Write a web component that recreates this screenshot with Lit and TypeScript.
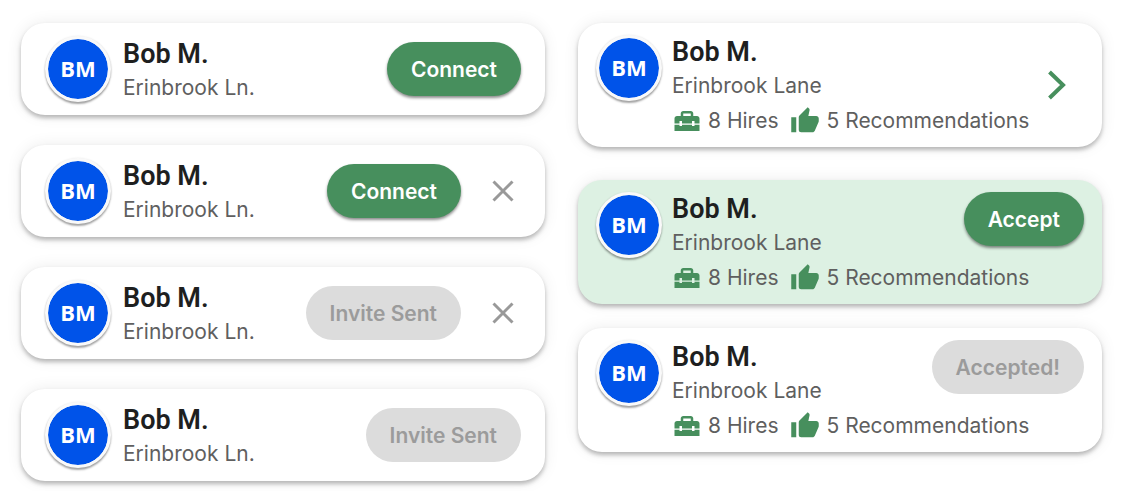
import { LitElement, html, css, nothing, svg } from "lit";
import { customElement, property } from "lit/decorators.js";
import { classMap } from "lit/directives/class-map.js";

const toolboxIcon = svg`<path d="M18 16H16V15H8V16H6V15H2V20H22V15H18V16M20 8H17V6C17 4.9 16.1 4 15 4H9C7.9 4 7 4.9 7 6V8H4C2.9 8 2 8.9 2 10V14H6V12H8V14H16V12H18V14H22V10C22 8.9 21.1 8 20 8M15 8H9V6H15V8Z"/>`;
const thumbIcon = svg`<path d="M23,10C23,8.89 22.1,8 21,8H14.68L15.64,3.43C15.66,3.33 15.67,3.22 15.67,3.11C15.67,2.7 15.5,2.32 15.23,2.05L14.17,1L7.59,7.58C7.22,7.95 7,8.45 7,9V19A2,2 0 0,0 9,21H18C18.83,21 19.54,20.5 19.84,19.78L22.86,12.73C22.95,12.5 23,12.26 23,12V10M1,21H5V9H1V21Z"/>`;

@customElement("person-card")
export class PersonCard extends LitElement {
  @property() name = "";
  @property() initials = "";
  @property() address = "";
  @property() action = "";
  @property({ type: Boolean }) done = false;
  @property({ type: Boolean }) dismissible = false;
  @property({ type: Boolean }) highlighted = false;
  @property({ type: Boolean }) detailed = false;
  @property({ type: Number }) hires = 0;
  @property({ type: Number }) recommendations = 0;

  static styles = css`
    :host {
      display: block;
      font-family: Inter, "Liberation Sans", sans-serif;
    }
    .card {
      display: grid;
      grid-template-columns: auto minmax(0, 1fr) auto;
      align-items: center;
      column-gap: 12px;
      padding: 10px 24px;
      border-radius: 24px;
      background: #fff;
      box-shadow: 0 3px 4px rgba(0, 0, 0, 0.26), 0 0 16px rgba(0, 0, 0, 0.08);
    }
    .detailed {
      align-items: start;
      column-gap: 10px;
      padding: 12px 18px 8px;
    }
    .highlighted {
      background: #ddf1e3;
    }
    .avatar {
      box-sizing: border-box;
      display: grid;
      place-items: center;
      width: 66px;
      height: 66px;
      padding-bottom: 2px;
      border: 3px solid #f9f9f9;
      border-radius: 50%;
      background: #0053e9;
      background-clip: padding-box;
      box-shadow: 0 2px 2px rgba(0, 0, 0, 0.35), 0 0 2px rgba(0, 0, 0, 0.1);
      color: #fff;
      font: 700 22px "Open Sans", "Noto Sans", sans-serif;
    }
    .text {
      padding-top: 4px;
      white-space: nowrap;
    }
    .detailed .text {
      padding-top: 0;
    }
    .name {
      margin: 0;
      color: #1e1f1f;
      font: 600 27px/34px Roboto, "Liberation Sans", sans-serif;
    }
    .address {
      margin: 0;
      color: #5f5f5f;
      font-size: 21px;
      line-height: 34px;
    }
    .stats {
      grid-column: 2 / -1;
      grid-row: 2;
      display: flex;
      gap: 12px;
      margin: 0;
      padding: 0;
      list-style: none;
      color: #5f5f5f;
      font-size: 21px;
      line-height: 36px;
      white-space: nowrap;
    }
    .linked .stats {
      grid-column: 2;
    }
    .stat {
      display: flex;
      align-items: center;
      gap: 6px;
    }
    .stat svg {
      width: 30px;
      height: 30px;
      fill: #478f5d;
    }
    .actions {
      display: flex;
      align-items: center;
      gap: 24px;
    }
    button {
      border: 0;
      padding: 0;
      background: none;
      cursor: pointer;
    }
    .pill {
      height: 54px;
      padding: 0 24px;
      border-radius: 27px;
      background: #478f5d;
      box-shadow: 0 2px 3px rgba(0, 0, 0, 0.45);
      color: #fff;
      font: 600 21px Inter, "Liberation Sans", sans-serif;
      white-space: nowrap;
    }
    .pill:disabled {
      background: #dcdcdc;
      box-shadow: none;
      color: #9b9b9b;
      cursor: default;
    }
    .icon-button {
      display: grid;
      place-items: center;
      width: 36px;
      height: 36px;
    }
    .icon-button svg {
      fill: none;
      stroke: #999;
      stroke-width: 3;
    }
    .open {
      grid-column: 3;
      grid-row: 1 / span 2;
      align-self: center;
      margin: 0 9px 4px 0;
    }
    .open svg {
      stroke: #478f5d;
      stroke-width: 4;
    }
  `;

  private renderActions() {
    if (!this.action) {
      return html`<button class="icon-button open" aria-label="Open profile">
        <svg width="20" height="32" viewBox="0 0 20 32"><path d="M2.500 3L16 16L2.500 29" /></svg>
      </button>`;
    }
    return html`<div class="actions">
      <button class="pill" ?disabled=${this.done}>${this.action}</button>
      ${this.dismissible
        ? html`<button class="icon-button" aria-label="Dismiss">
            <svg width="24" height="24" viewBox="0 0 24 24"><path d="M2.500 2.500L21.500 21.500M21.500 2.500L2.500 21.500" /></svg>
          </button>`
        : nothing}
    </div>`;
  }

  render() {
    return html`<article
      class=${classMap({
        card: true,
        detailed: this.detailed,
        highlighted: this.highlighted,
        linked: !this.action,
      })}
    >
      <div class="avatar">${this.initials}</div>
      <div class="text">
        <h2 class="name">${this.name}</h2>
        <p class="address">${this.address}</p>
      </div>
      ${this.renderActions()}
      ${this.detailed
        ? html`<ul class="stats">
            <li class="stat"><svg viewBox="0 0 24 24">${toolboxIcon}</svg>${this.hires} Hires</li>
            <li class="stat"><svg viewBox="0 0 24 24">${thumbIcon}</svg>${this.recommendations} Recommendations</li>
          </ul>`
        : nothing}
    </article>`;
  }
}

@customElement("app-root")
export class AppRoot extends LitElement {
  static styles = css`
    :host {
      display: block;
      background: #fff;
    }
    .board {
      display: grid;
      grid-template-columns: repeat(2, minmax(0, 1fr));
      align-items: start;
      gap: 33px;
      padding: 23px 44px 10px 21px;
    }
    .invites {
      display: grid;
      gap: 30px;
    }
    .requests {
      display: grid;
      gap: 33px;
    }
    .pending {
      display: grid;
      gap: 24px;
    }
  `;

  private invite(action: string, done: boolean, dismissible: boolean) {
    return html`<person-card
      name="Bob M."
      initials="BM"
      address="Erinbrook Ln."
      action=${action}
      ?done=${done}
      ?dismissible=${dismissible}
    ></person-card>`;
  }

  private request(action: string, done: boolean, highlighted: boolean) {
    return html`<person-card
      detailed
      name="Bob M."
      initials="BM"
      address="Erinbrook Lane"
      hires="8"
      recommendations="5"
      action=${action}
      ?done=${done}
      ?highlighted=${highlighted}
    ></person-card>`;
  }

  render() {
    return html`<main class="board">
      <section class="invites">
        ${this.invite("Connect", false, false)} ${this.invite("Connect", false, true)}
        ${this.invite("Invite Sent", true, true)} ${this.invite("Invite Sent", true, false)}
      </section>
      <section class="requests">
        ${this.request("", false, false)}
        <div class="pending">
          ${this.request("Accept", false, true)} ${this.request("Accepted!", true, false)}
        </div>
      </section>
    </main>`;
  }
}
